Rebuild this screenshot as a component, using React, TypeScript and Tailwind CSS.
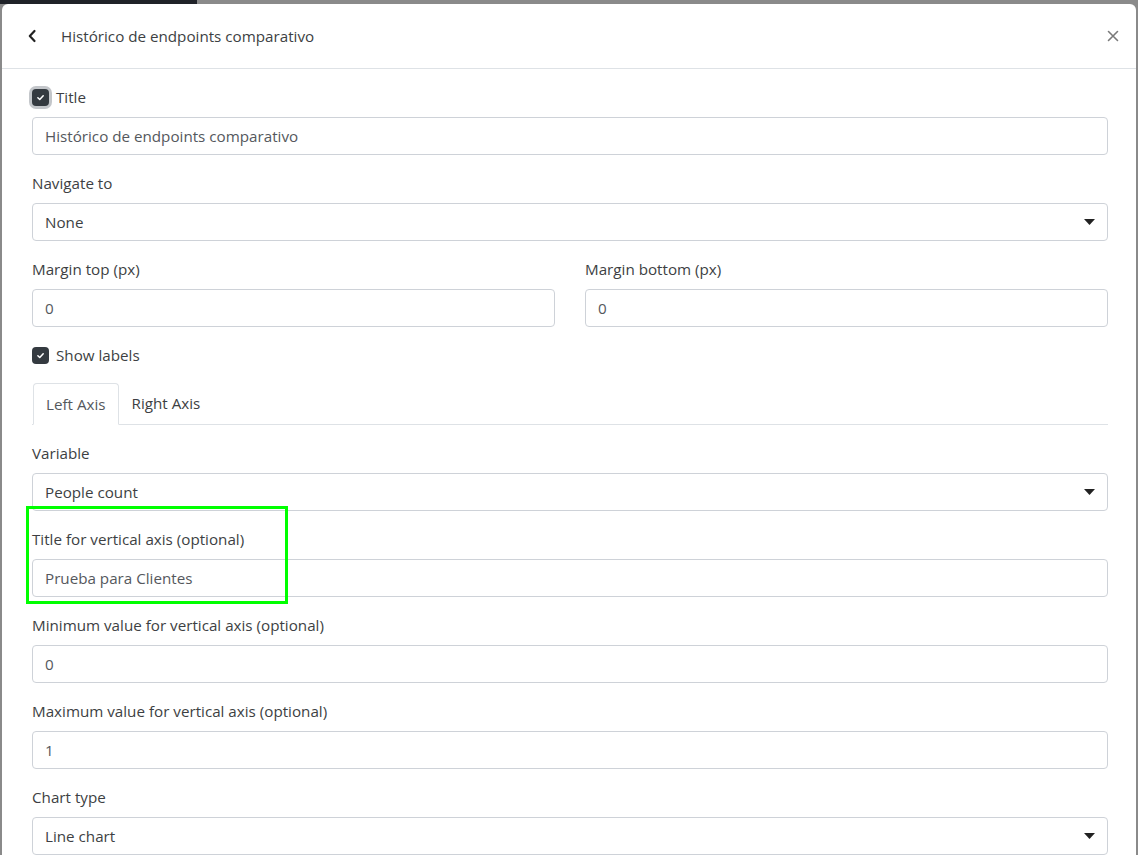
import type { ReactNode } from "react";

const font = { fontFamily: "'Open Sans', Lato, sans-serif" };

function Check({ ring }: { ring?: boolean }) {
  return (
    <span
      className={`flex h-[17px] w-[17px] items-center justify-center rounded-[4px] bg-[#343a40] ${
        ring ? "ring-[3px] ring-[#c3c6ca]" : ""
      }`}
    >
      <svg width="9" height="9" viewBox="0 0 12 12">
        <path d="M2.5 6.3 5 8.7 9.6 3.6" fill="none" stroke="#fff" strokeWidth="2" strokeLinecap="round" strokeLinejoin="round" />
      </svg>
    </span>
  );
}

function Label({ children }: { children: ReactNode }) {
  return <div className="mb-2 h-6 leading-6 text-[#3d3f43]">{children}</div>;
}

function Input({ value }: { value: string }) {
  return (
    <div className="flex h-[38px] items-center rounded-[4px] border border-[#ced2d8] px-3 text-[#55585d]">
      {value}
    </div>
  );
}

function Select({ value }: { value: string }) {
  return (
    <div className="flex h-[38px] items-center justify-between rounded-[4px] border border-[#ced2d8] pl-3 pr-[12px] text-[#3d3f43]">
      <span>{value}</span>
      <svg width="11" height="6" viewBox="0 0 11 6">
        <path d="M0 0h11L5.5 6z" fill="#222" />
      </svg>
    </div>
  );
}

function Field({ label, children }: { label: string; children: ReactNode }) {
  return (
    <div className="mb-4">
      <Label>{label}</Label>
      {children}
    </div>
  );
}

export default function App() {
  return (
    <div className="relative min-h-[855px] bg-[#8a8a8a] text-[15.2px]" style={font}>
      <div className="flex h-[4px]">
        <div className="w-[197px] bg-[#1f2228]" />
        <div className="flex-1" />
      </div>
      <div className="relative mx-[2px] min-h-[851px] rounded-t-[6px] bg-white">
        <div className="flex h-[65px] items-center border-b border-[#dee2e6] pl-[25px] pr-[17px]">
          <svg width="10" height="14" viewBox="0 0 10 14" className="mr-[24px]">
            <path d="M7.5 2 2.8 7l4.7 5" fill="none" stroke="#222" strokeWidth="2.2" strokeLinecap="round" strokeLinejoin="round" />
          </svg>
          <span className="text-[#3d3f43]">Histórico de endpoints comparativo</span>
          <svg width="12" height="12" viewBox="0 0 12 12" className="ml-auto">
            <path d="M1.5 1.5l9 9M10.5 1.5l-9 9" stroke="#7a7a7a" strokeWidth="1.6" strokeLinecap="round" />
          </svg>
        </div>

        <div className="pl-[30px] pr-[28px] pt-4">
          <div className="mb-2 flex h-6 items-center gap-[7px] text-[#3d3f43]">
            <Check ring />
            <span>Title</span>
          </div>
          <div className="mb-4">
            <Input value="Histórico de endpoints comparativo" />
          </div>

          <Field label="Navigate to">
            <Select value="None" />
          </Field>

          <div className="grid grid-cols-2 gap-[30px]">
            <Field label="Margin top (px)">
              <Input value="0" />
            </Field>
            <Field label="Margin bottom (px)">
              <Input value="0" />
            </Field>
          </div>

          <div className="mb-4 flex h-6 items-center gap-[7px] text-[#3d3f43]">
            <Check />
            <span>Show labels</span>
          </div>

          <div className="mb-4 flex h-[42px] border-b border-[#dee2e6]">
            <div className="-mb-px ml-px flex items-center rounded-t-[4px] border border-b-white border-[#dee2e6] bg-white px-[12px] text-[#55585d]">
              Left Axis
            </div>
            <div className="flex items-center px-[13px] text-[#3d3f43]">Right Axis</div>
          </div>

          <Field label="Variable">
            <Select value="People count" />
          </Field>
          <Field label="Title for vertical axis (optional)">
            <Input value="Prueba para Clientes" />
          </Field>
          <Field label="Minimum value for vertical axis (optional)">
            <Input value="0" />
          </Field>
          <Field label="Maximum value for vertical axis (optional)">
            <Input value="1" />
          </Field>
          <Field label="Chart type">
            <Select value="Line chart" />
          </Field>
        </div>
      </div>
      <div className="pointer-events-none absolute left-[26px] top-[506px] h-[98px] w-[262px] border-[3px] border-[#00ff00]" />
    </div>
  );
}
